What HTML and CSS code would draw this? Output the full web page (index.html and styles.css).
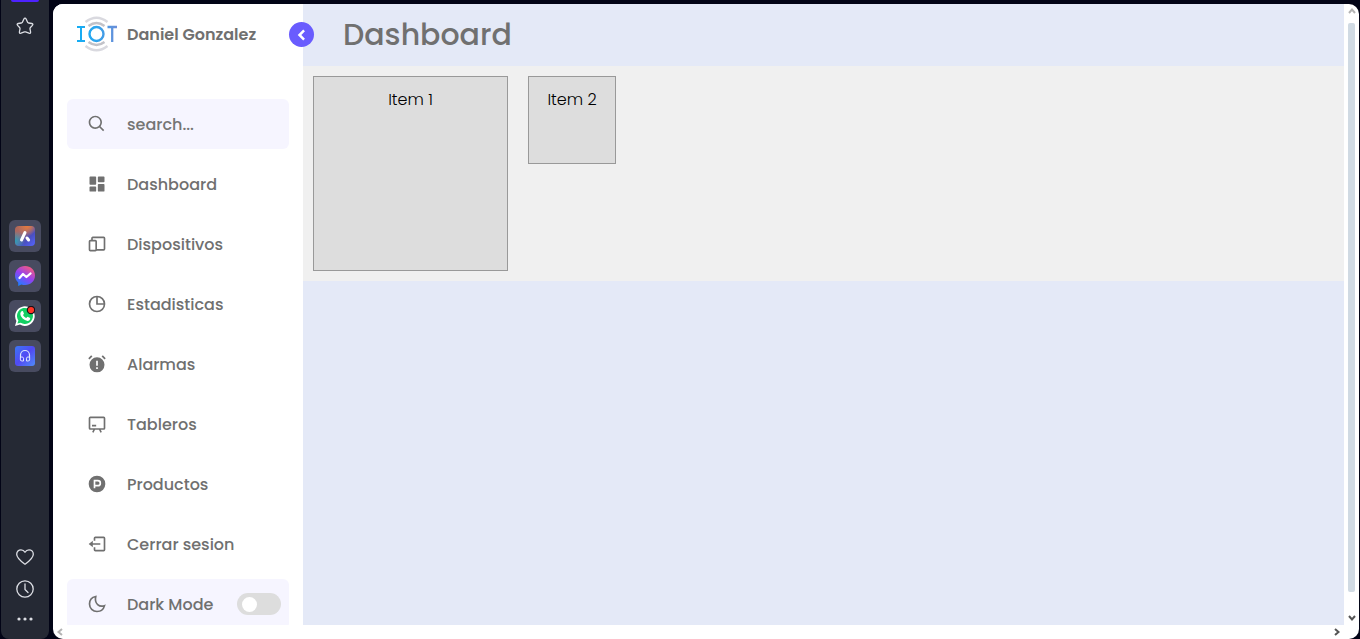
FILE: index.html
```html
<!DOCTYPE html>
<html lang="es">
<head>
<meta charset="utf-8">
<meta name="viewport" content="width=device-width, initial-scale=1">
<title>Dashboard</title>
<link rel="stylesheet" href="styles.css">
</head>
<body>
<div class="browser">
  <aside class="rail" aria-label="Browser">
    <div class="rail-group">
      <span class="rail-active"></span>
      <button class="rail-btn" aria-label="Bookmarks"><svg class="line" viewBox="0 0 20 20"><path d="M10 2.2Q10.7 2.2 11.100 3L12.700 6.500Q13 7 13.600 7L16.800 7.500Q18.600 8 17.400 9.400L15.200 11.800Q14.900 12.200 15 12.800L15.600 16Q15.700 17.700 14 17.200L10.600 15.900H9.400L6 17.200Q4.300 17.700 4.400 16L5 12.800Q5.100 12.200 4.800 11.800L2.600 9.400Q1.400 8 3.200 7.500L6.400 7Q7 7 7.300 6.500L8.900 3Q9.300 2.200 10 2.200Z"/></svg></button>
    </div>
    <div class="rail-group apps">
      <button class="app" aria-label="Aria"><svg viewBox="0 0 20 20"><defs><linearGradient id="aria" x1="0" y1="0" x2="1" y2="1"><stop offset="0" stop-color="#b5664f"/><stop offset=".35" stop-color="#a06a72"/><stop offset=".65" stop-color="#4a4fc0"/><stop offset="1" stop-color="#5566ff"/></linearGradient><radialGradient id="teal" cx="0" cy=".75" r=".5"><stop offset="0" stop-color="#2b9dbb"/><stop offset="1" stop-color="#2b9dbb" stop-opacity="0"/></radialGradient><radialGradient id="warm" cx=".6" cy="0" r=".5"><stop offset="0" stop-color="#e77b3d"/><stop offset="1" stop-color="#e77b3d" stop-opacity="0"/></radialGradient></defs><rect width="20" height="20" rx="4" fill="url(#aria)"/><rect width="20" height="20" rx="4" fill="url(#teal)"/><rect width="20" height="20" rx="4" fill="url(#warm)"/><path d="M6.500 14 10 6.500M12 12l1.600 2" fill="none" stroke="#fff" stroke-width="3" stroke-linecap="round"/></svg></button>
      <button class="app" aria-label="Messenger"><svg viewBox="0 0 20 20"><defs><linearGradient id="msg" x1=".2" y1="1" x2=".8" y2="0"><stop offset="0" stop-color="#1683ff"/><stop offset=".5" stop-color="#9440f2"/><stop offset="1" stop-color="#ff5c74"/></linearGradient></defs><path d="M10 0C4.300 0 0 4.100 0 9.500c0 2.900 1.200 5.300 3.200 7V20l3.200-1.600c1.100.4 2.300.6 3.600.6 5.700 0 10-4.100 10-9.500S15.700 0 10 0Z" fill="url(#msg)"/><path d="M4.500 12 8 8l3.400 3L15.500 7.500" fill="none" stroke="#fff" stroke-width="2.300" stroke-linejoin="round" stroke-linecap="round"/></svg></button>
      <button class="app" aria-label="WhatsApp"><svg viewBox="0 0 20 20"><path d="M0 20 1.400 15A9.800 9.800 0 1 1 5 18.600Z" fill="#fff"/><path d="m2.400 17.600 1-3.100A8 8 0 1 1 5.700 16.700Z" fill="#13cf63"/><path d="M6.500 5.200 7.900 5 9 7.700 8 9c.8 1.500 1.700 2.300 3.300 3l1.200-1.300 2.700 1.300c0 2-1.200 2.800-2.600 2.900C9 14.600 5.500 11 5.300 7.800c0-1 .4-1.900 1.200-2.600Z" fill="#fff"/><circle cx="16" cy="4" r="3.700" fill="#ff3526" stroke="#17131c" stroke-width="1.200"/></svg></button>
      <button class="app" aria-label="Player"><svg viewBox="0 0 20 20"><defs><linearGradient id="player" x1="0" y1="0" x2="1" y2="1"><stop offset="0" stop-color="#3b78f5"/><stop offset=".5" stop-color="#5149f4"/><stop offset="1" stop-color="#4f8df8"/></linearGradient></defs><rect width="20" height="20" rx="3" fill="url(#player)"/><path d="M5.500 12V9a4.500 4.500 0 0 1 9 0v3" fill="none" stroke="#dce3ff" stroke-width="1.200"/><path d="M5.300 13a1.600 1.600 0 0 1 3.200-.8V15H7a1.700 1.700 0 0 1-1.700-2ZM14.700 13a1.600 1.600 0 0 0-3.200-.8V15H13a1.700 1.700 0 0 0 1.700-2Z" fill="none" stroke="#dce3ff"/></svg></button>
    </div>
    <div class="rail-group tools">
      <button class="rail-btn" aria-label="Favorites"><svg class="line" viewBox="0 0 20 20"><path d="M10 17.200C7 15 1.700 11.300 1.700 7.200 1.700 4.600 3.600 2.800 6 2.800c1.800 0 3.200 1 4 2.400.8-1.400 2.200-2.400 4-2.400 2.400 0 4.300 1.800 4.300 4.400 0 4.100-5.300 7.800-8.300 10Z"/></svg></button>
      <button class="rail-btn" aria-label="History"><svg class="line" viewBox="0 0 20 20"><circle cx="10" cy="10" r="8.200"/><path d="M10 5v5.500l3 3"/></svg></button>
      <button class="rail-btn more" aria-label="More"><svg class="dots" viewBox="0 0 20 20"><circle cx="4" cy="10" r="1.600"/><circle cx="10" cy="10" r="1.600"/><circle cx="16" cy="10" r="1.600"/></svg></button>
    </div>
  </aside>

  <div class="window">
    <div class="page">
      <nav class="sidebar">
        <header class="brand">
          <svg class="logo" viewBox="0 0 40 36"><defs><linearGradient id="iot" gradientUnits="userSpaceOnUse" x1="0" y1="0" x2="40" y2="0"><stop offset="0" stop-color="#14adf4"/><stop offset=".45" stop-color="#2aa5ee"/><stop offset="1" stop-color="#6c8ed8"/></linearGradient></defs><g fill="none" stroke="#d9d9df" stroke-width="2.400"><path d="M8.500 6Q19.500 -2.500 30.500 6M8.500 30Q19.500 38.500 30.500 30"/><path d="M11.500 10Q19.500 4 27.500 10M11.500 26Q19.500 32 27.500 26" stroke="#c2c2c8"/></g><g fill="none" stroke="url(#iot)"><path d="M0 11H8M0 25H8M4 10.500V25.500" stroke-width="2"/><circle cx="19.500" cy="18" r="7" stroke-width="2.400"/><path d="M30.500 11H40M35.200 10.500V26" stroke-width="2.300"/></g></svg>
          <span class="name">Daniel Gonzalez</span>
          <button class="collapse" aria-label="Collapse menu"><svg viewBox="0 0 24 24"><path d="m14.500 6.500-5.500 5.500 5.500 5.500"/></svg></button>
        </header>
        <label class="entry boxed search" for="search">
          <svg class="icon" viewBox="0 0 24 24"><path d="M10 18a7.952 7.952 0 0 0 4.897-1.688l4.396 4.396 1.414-1.414-4.396-4.396A7.952 7.952 0 0 0 18 10c0-4.411-3.589-8-8-8s-8 3.589-8 8 3.589 8 8 8zm0-14c3.309 0 6 2.691 6 6s-2.691 6-6 6-6-2.691-6-6 2.691-6 6-6z"/></svg>
          <input id="search" type="search" placeholder="search..." aria-label="search">
        </label>
        <ul class="menu">
          <li><a class="entry" href="#"><svg class="icon" viewBox="0 0 24 24"><path d="M4 13h6a1 1 0 0 0 1-1V4a1 1 0 0 0-1-1H4a1 1 0 0 0-1 1v8a1 1 0 0 0 1 1zm-1 7a1 1 0 0 0 1 1h6a1 1 0 0 0 1-1v-4a1 1 0 0 0-1-1H4a1 1 0 0 0-1 1v4zm10 0a1 1 0 0 0 1 1h6a1 1 0 0 0 1-1v-7a1 1 0 0 0-1-1h-6a1 1 0 0 0-1 1v7zm1-10h6a1 1 0 0 0 1-1V4a1 1 0 0 0-1-1h-6a1 1 0 0 0-1 1v5a1 1 0 0 0 1 1z"/></svg>Dashboard</a></li>
          <li><a class="entry" href="#"><svg class="icon outline" viewBox="0 0 24 24"><rect x="3" y="8" width="8" height="12" rx="1"/><path d="M6 8V5a1 1 0 0 1 1-1h13a1 1 0 0 1 1 1v13a1 1 0 0 1-1 1h-9"/></svg>Dispositivos</a></li>
          <li><a class="entry" href="#"><svg class="icon outline" viewBox="0 0 24 24"><circle cx="12" cy="12" r="9"/><path d="M12 3v9h9"/></svg>Estadisticas</a></li>
          <li><a class="entry" href="#"><svg class="icon" viewBox="0 0 24 24"><path fill-rule="evenodd" d="M12 4a9 9 0 1 0 0 18 9 9 0 0 0 0-18Zm-1 4h2v6h-2Zm0 8h2v2h-2Z"/><path d="m5 1.500 1.500 1.500-3.500 3.500L1.500 5ZM19 1.500 17.500 3 21 6.500 22.500 5Z"/></svg>Alarmas</a></li>
          <li><a class="entry" href="#"><svg class="icon outline" viewBox="0 0 24 24"><path d="M4 4h16a1 1 0 0 1 1 1v12a1 1 0 0 1-1 1H4a1 1 0 0 1-1-1V5a1 1 0 0 1 1-1ZM9 18l-2 4M15 18l2 4M6 14h5"/></svg>Tableros</a></li>
          <li><a class="entry" href="#"><svg class="icon" viewBox="0 0 24 24"><path fill-rule="evenodd" d="M12 2a10 10 0 1 0 0 20 10 10 0 0 0 0-20ZM8 7h5a4 4 0 0 1 0 8h-3v2H8Zm2 2v4h3a2 2 0 0 0 0-4Z"/></svg>Productos</a></li>
          <li><a class="entry" href="#"><svg class="icon outline" viewBox="0 0 24 24"><path d="M9 8V5a1 1 0 0 1 1-1h10a1 1 0 0 1 1 1v14a1 1 0 0 1-1 1H10a1 1 0 0 1-1-1v-3M6 12h10"/><path class="solid" d="M7 8v8l-5-4Z"/></svg>Cerrar sesion</a></li>
        </ul>
        <label class="entry boxed" for="dark"><svg class="icon outline" viewBox="0 0 24 24"><path d="M10.500 3C5.800 4 3 7.800 3 12a9 9 0 0 0 9 9c4.200 0 7.900-2.700 9-7-5.900 2.200-12.500-2-10.500-11Z"/></svg>Dark Mode<input id="dark" class="switch" type="checkbox"></label>
      </nav>
      <main class="home">
        <h1>Dashboard</h1>
        <section class="grid">
          <div class="item large">Item 1</div>
          <div class="item small">Item 2</div>
        </section>
      </main>
    </div>
    <div class="scroll vertical">
      <button class="faded" aria-label="Scroll up"><svg viewBox="0 0 8 8"><path d="m1 6 3-3.500L7 6"/></svg></button>
      <span class="thumb"></span>
      <button aria-label="Scroll down"><svg viewBox="0 0 8 8"><path d="m1 2 3 3.500L7 2"/></svg></button>
    </div>
    <div class="scroll horizontal">
      <button class="faded" aria-label="Scroll left"><svg viewBox="0 0 8 8"><path d="M6 1 2.500 4 6 7"/></svg></button>
      <button aria-label="Scroll right"><svg viewBox="0 0 8 8"><path d="m2 1 3.500 3L2 7"/></svg></button>
    </div>
  </div>
</div>
</body>
</html>
```

FILE: styles.css
```css
* {
  box-sizing: border-box;
  margin: 0;
  padding: 0;
}

body {
  background: #020416;
  color: #707070;
  font-family: Poppins, Inter, "Open Sans", sans-serif;
  font-size: 16px;
}

button {
  border: 0;
  background: none;
  cursor: pointer;
}

svg {
  display: block;
}

.browser {
  display: flex;
  gap: 4px;
  height: 100vh;
  padding: 0 1px;
}

/* Browser rail */
.rail {
  display: flex;
  flex-direction: column;
  justify-content: space-between;
  width: 48px;
  background: #252934;
  border-radius: 0 0 8px 8px;
}

.rail-group {
  display: flex;
  flex-direction: column;
  align-items: center;
}

.rail-active {
  width: 28px;
  height: 2px;
  border-radius: 0 0 4px 4px;
  background: #4d22ff;
}

.rail-btn {
  display: grid;
  place-items: center;
  width: 32px;
  height: 32px;
}

.rail-group:first-child {
  gap: 8px;
  height: 42px;
}

.rail-btn svg {
  width: 20px;
  height: 20px;
}

.line {
  fill: none;
  stroke: #dcdee4;
  stroke-width: 1.300;
  stroke-linejoin: round;
  stroke-linecap: round;
}

.dots {
  fill: #dcdee4;
}

.apps {
  gap: 8px;
  flex: 1;
  padding-top: 178px;
}

.app {
  display: grid;
  place-items: center;
  width: 32px;
  height: 32px;
  border-radius: 6px;
  background: #484b60;
}

.app svg {
  width: 20px;
  height: 20px;
}

.tools {
  padding-bottom: 6px;
}

.more {
  height: 28px;
}

/* Window with its scroll bars */
.window {
  display: grid;
  grid-template-columns: minmax(0, 1fr) 15px;
  grid-template-rows: minmax(0, 1fr) 14px;
  flex: 1;
  min-width: 0;
  margin-top: 4px;
  overflow: hidden;
  border-radius: 10px;
  background: #fff;
}

.page {
  display: flex;
  overflow: hidden;
  background: #e4e9f7;
}

.scroll {
  display: flex;
  align-items: center;
  justify-content: space-between;
}

.scroll svg {
  width: 8px;
  height: 8px;
  fill: none;
  stroke: #555;
  stroke-width: 2;
}

.scroll .faded svg {
  stroke: #b4b4b4;
}

.vertical {
  flex-direction: column;
  gap: 8px;
  padding: 3px 0;
}

.vertical .thumb {
  flex: 1;
  width: 7px;
  margin-bottom: 14px;
  border-radius: 2px;
  background: #d0dae3;
}

.horizontal {
  padding: 0 3px;
}

/* Sidebar */
.sidebar {
  flex: none;
  width: 250px;
  padding: 10px 14px;
  background: #fff;
  font-weight: 500;
}

.brand {
  position: relative;
  display: flex;
  align-items: center;
  gap: 10px;
  height: 40px;
  margin-bottom: 45px;
  padding-left: 10px;
}

.logo {
  width: 40px;
  height: 36px;
}

.name {
  font-weight: 600;
}

.collapse {
  position: absolute;
  top: 8px;
  right: -25px;
  display: grid;
  place-items: center;
  width: 25px;
  height: 25px;
  border-radius: 50%;
  background: #695cfe;
}

.collapse svg {
  width: 20px;
  height: 20px;
  fill: none;
  stroke: #fff;
  stroke-width: 3;
}

.menu {
  list-style: none;
}

.entry {
  display: flex;
  align-items: center;
  gap: 20px;
  height: 50px;
  margin-bottom: 10px;
  padding: 0 8px 0 20px;
  border-radius: 6px;
  color: inherit;
  text-decoration: none;
  white-space: nowrap;
}

.boxed {
  background: #f6f5ff;
}

.icon {
  flex: none;
  width: 20px;
  height: 20px;
  fill: #707070;
}

.outline {
  fill: none;
  stroke: #707070;
  stroke-width: 2;
}

.solid {
  fill: #707070;
  stroke: none;
}

.search input {
  width: 100%;
  min-width: 0;
  border: 0;
  outline: 0;
  background: none;
  color: inherit;
  font: inherit;
}

.search input::placeholder {
  color: #757575;
}

.switch {
  flex: none;
  appearance: none;
  width: 44px;
  height: 22px;
  margin-left: auto;
  border-radius: 11px;
  background: #ddd;
}

.switch::before {
  content: "";
  display: block;
  width: 15px;
  height: 15px;
  margin: 4px 5px;
  border-radius: 50%;
  background: #fff;
}

/* Content */
.home {
  flex: 1;
  min-width: 0;
}

.home h1 {
  padding: 0 40px;
  font-size: 30px;
  font-weight: 500;
  line-height: 62px;
}

.grid {
  display: flex;
  align-items: flex-start;
  gap: 20px;
  padding: 10px;
  background: #f0f0f0;
}

.item {
  padding: 10px;
  border: 1px solid #999;
  background: #ddd;
  color: #000;
  font-weight: 300;
  line-height: 26px;
  text-align: center;
}

.large {
  width: 195px;
  height: 195px;
}

.small {
  width: 88px;
  height: 88px;
}
```
